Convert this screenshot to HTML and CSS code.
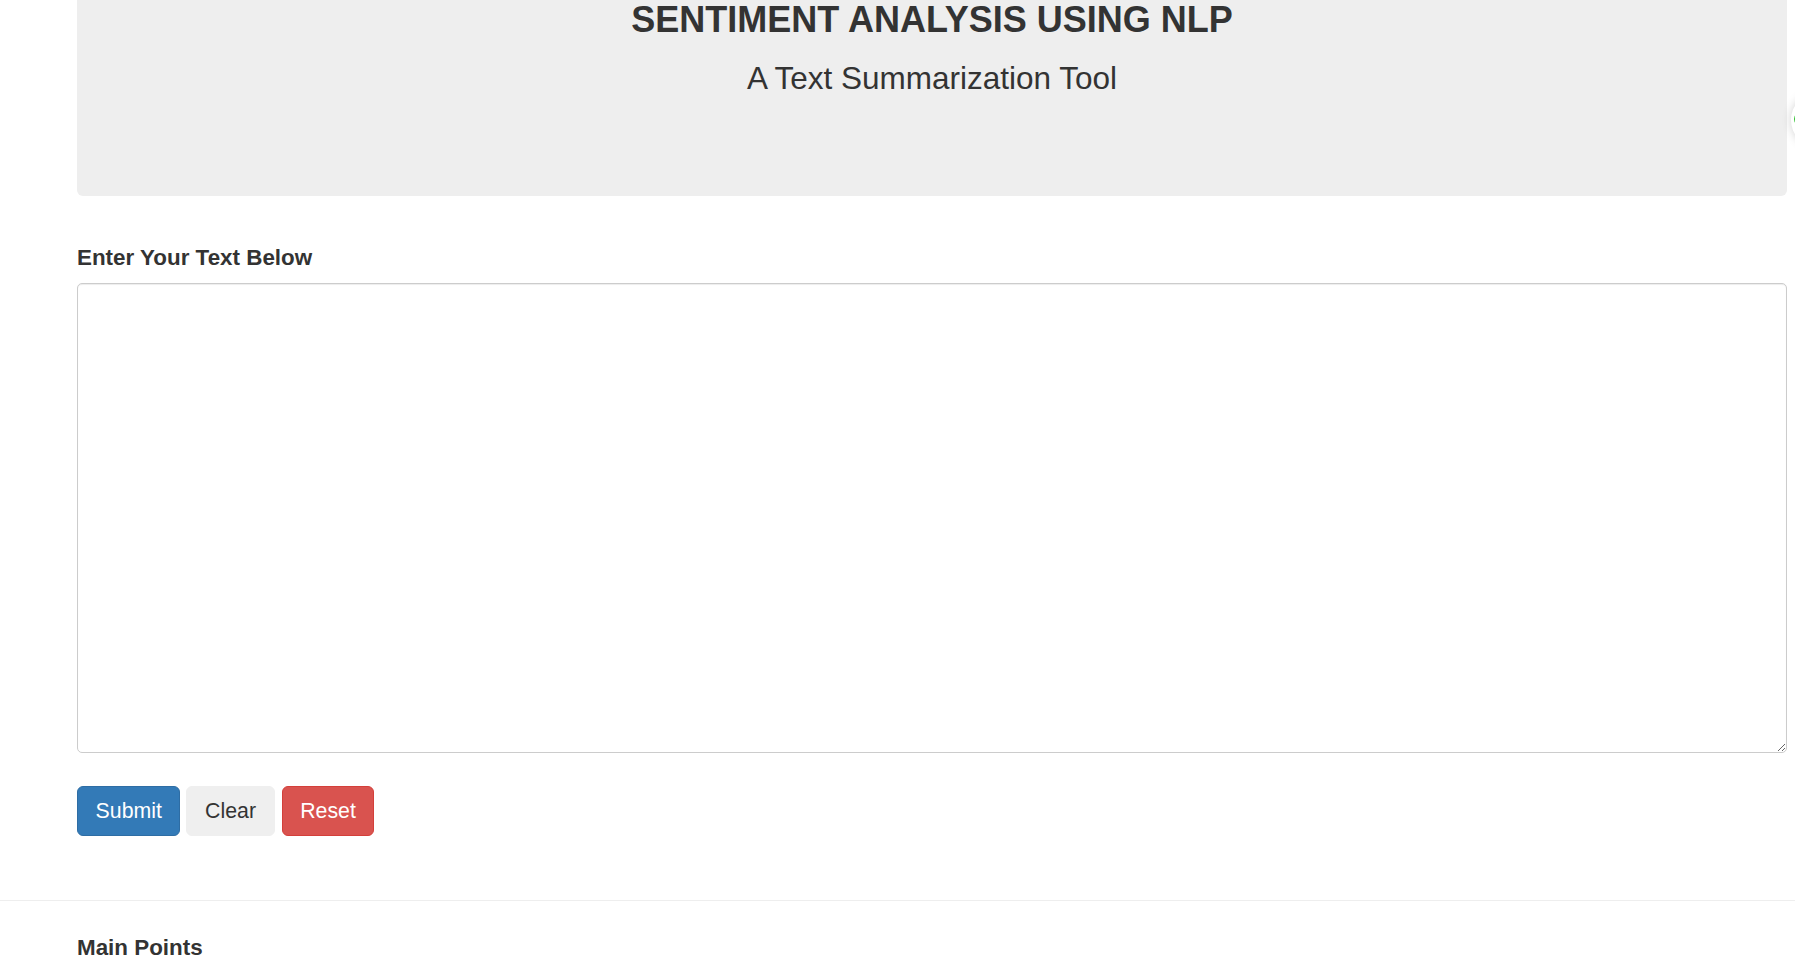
FILE: index.html
```html
<!DOCTYPE html>
<html lang="en">
<head>
<meta charset="utf-8">
<title>Sentiment Analysis Using NLP</title>
<link rel="stylesheet" href="styles.css">
</head>
<body>
<div class="container">
  <div class="jumbotron">
    <h1 class="title">SENTIMENT ANALYSIS USING NLP</h1>
    <p class="subtitle">A Text Summarization Tool</p>
  </div>
  <form class="form">
    <label class="label" for="text">Enter Your Text Below</label>
    <textarea id="text" class="textarea"></textarea>
    <div class="actions">
      <button type="button" class="btn btn-primary">Submit</button>
      <button type="button" class="btn btn-default">Clear</button>
      <button type="button" class="btn btn-danger">Reset</button>
    </div>
  </form>
</div>
<hr class="divider">
<div class="container">
  <h4 class="label">Main Points</h4>
</div>
<div class="float-widget"><span class="float-dot"></span></div>
</body>
</html>
```

FILE: styles.css
```css
* { box-sizing: border-box; }
html, body { margin: 0; padding: 0; }
body {
  font-family: "Liberation Sans", Arial, sans-serif;
  color: #333;
  background: #fff;
  overflow: hidden;
}
.container {
  margin-left: 77px;
  width: 1710px;
}
.jumbotron {
  background: #eeeeee;
  border-radius: 0 0 6px 6px;
  padding: 0 0 95px 0;
  text-align: center;
  height: 196px;
}
.title {
  margin: 0;
  font-size: 36px;
  font-weight: bold;
  line-height: 40px;
  color: #333;
}
.subtitle {
  margin: 17px 0 0 0;
  font-size: 31.5px;
  line-height: 43px;
  color: #333;
}
.form {
  display: flex;
  flex-direction: column;
  padding-top: 47px;
}
.label {
  display: block;
  margin: 0;
  font-size: 22.4px;
  font-weight: bold;
  line-height: 30px;
  color: #333;
}
.textarea {
  display: block;
  margin-top: 10px;
  width: 100%;
  height: 470px;
  border: 1px solid #ccc;
  border-radius: 5px;
  box-shadow: inset 0 1px 1px rgba(0,0,0,.075);
  font-family: "Liberation Sans", Arial, sans-serif;
  font-size: 18px;
  padding: 8px 12px;
  resize: vertical;
}
.actions {
  display: flex;
  gap: 6px;
  margin-top: 33px;
}
.btn {
  height: 50px;
  padding: 0 17.6px;
  font-family: "Liberation Sans", Arial, sans-serif;
  font-size: 21.3px;
  border-radius: 6px;
  border: 1px solid transparent;
  cursor: pointer;
}
.btn-primary { background: #337ab7; border-color: #2e6da4; color: #fff; }
.btn-default { background: #efefef; border-color: #efefef; color: #333; }
.btn-danger { background: #d9534f; border-color: #d43f3a; color: #fff; margin-left: 1px; }
.divider {
  margin: 64px 0 32px 0;
  border: 0;
  border-top: 1px solid #eee;
  height: 0;
}
.float-widget {
  position: fixed;
  left: 1791px;
  top: 92px;
  width: 56px;
  height: 56px;
  border-radius: 50%;
  background: #fff;
  box-shadow: 0 0 10px rgba(0,0,0,.18);
}
.float-dot {
  position: absolute;
  left: 3px;
  top: 20px;
  width: 14px;
  height: 14px;
  border-radius: 50%;
  background: #2bbf2b;
}
```
